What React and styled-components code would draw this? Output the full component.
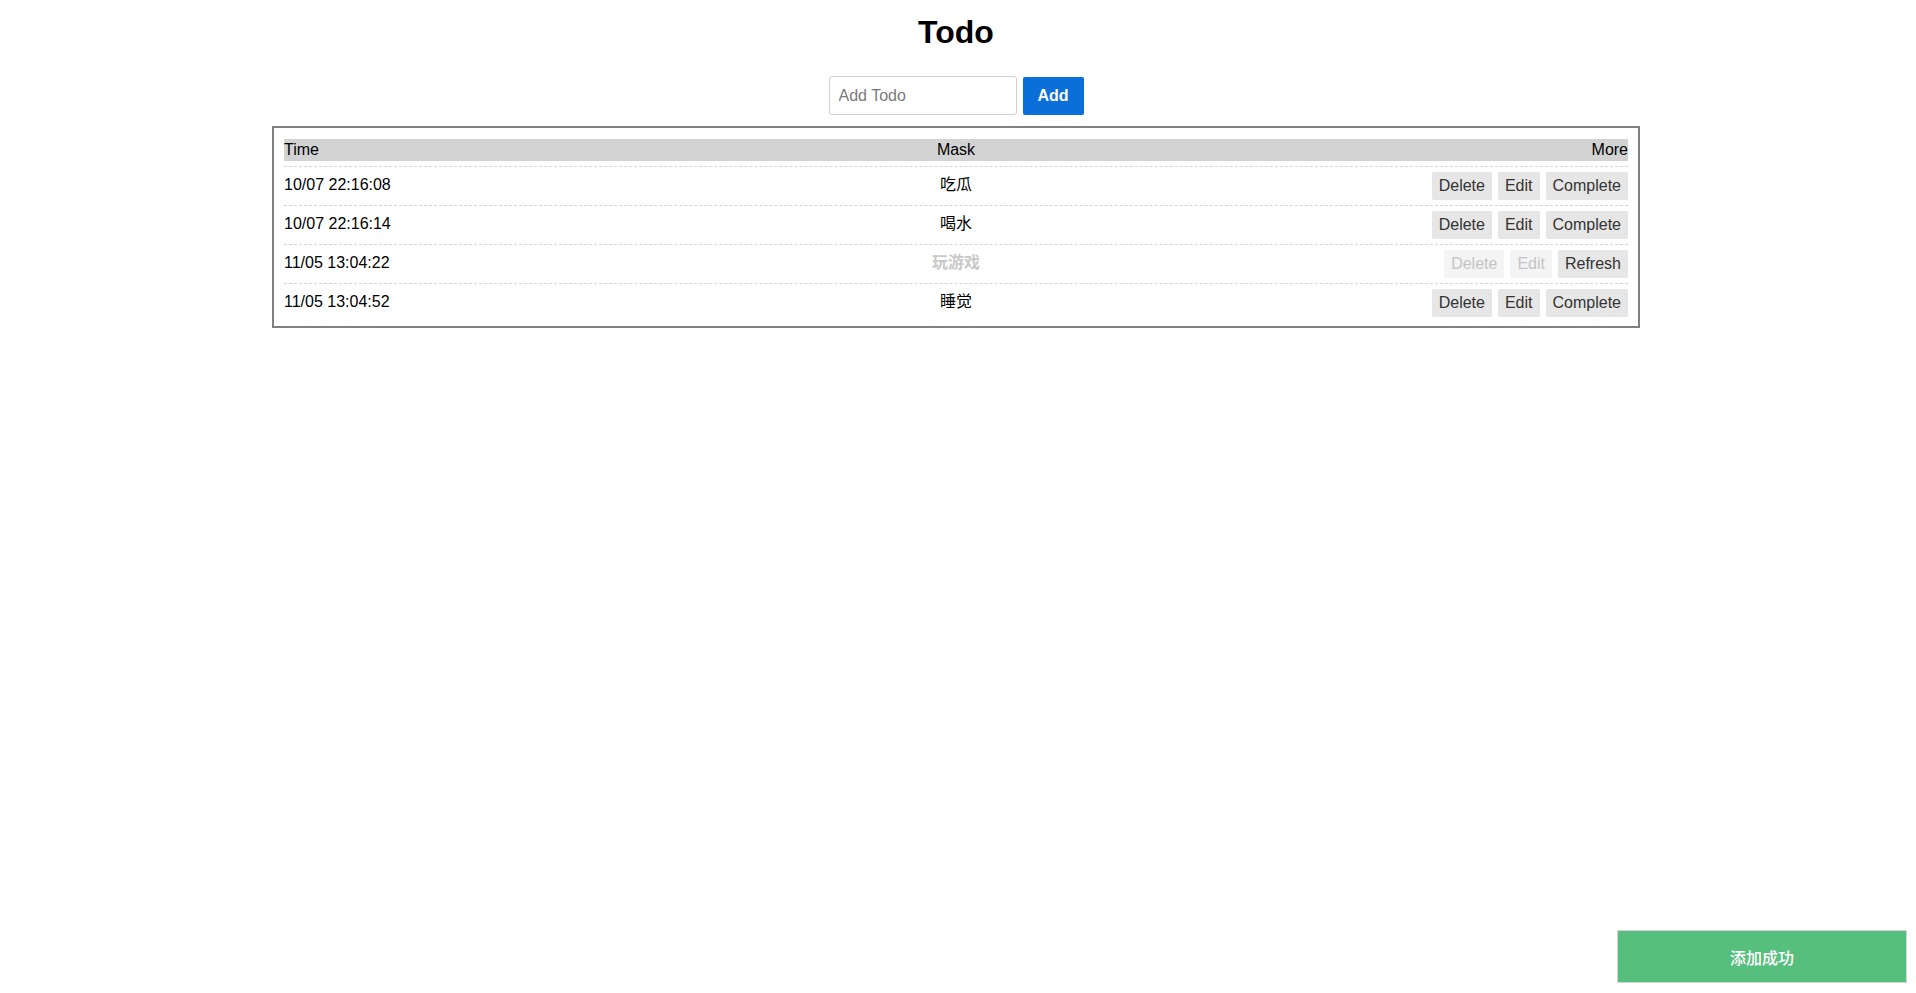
import React, { useState } from 'react';
import styled, { createGlobalStyle, css } from 'styled-components';

const GlobalStyle = createGlobalStyle`
	html, body {
		margin: 0;
		padding: 0;
		background: #fff;
	}
	body {
		font-family: 'Liberation Sans', Arial, 'Noto Sans CJK SC', sans-serif;
		font-size: 16px;
		color: #000;
	}
`;

const Page = styled.div`
	padding: 14px 4px 0 0;
`;

const Title = styled.h1`
	margin: 0;
	font-size: 32px;
	font-weight: bold;
	line-height: 37px;
	text-align: center;
`;

const AddForm = styled.form`
	display: flex;
	justify-content: center;
	gap: 6px;
	margin: 25px 0 11px;
`;

const TodoInput = styled.input`
	box-sizing: border-box;
	width: 188px;
	height: 39px;
	padding: 0 9px;
	border: 1px solid #cfcfcf;
	border-radius: 3px;
	font-family: inherit;
	font-size: 16px;
	color: #333;
	outline: none;
	&::placeholder {
		color: #7a7a7a;
	}
`;

const AddButton = styled.button`
	box-sizing: border-box;
	width: 61px;
	height: 38px;
	margin-top: 1px;
	border: none;
	border-radius: 2px;
	background-color: #0a6fd8;
	color: #fff;
	font-family: inherit;
	font-size: 16px;
	font-weight: bold;
`;

const Board = styled.div`
	box-sizing: border-box;
	width: 1368px;
	margin: 0 auto;
	padding: 11px 10px 4px;
	border: 2px solid #808080;
`;

const Grid = css`
	display: grid;
	grid-template-columns: 1fr 1fr 1fr;
	align-items: center;
`;

const HeaderRow = styled.div`
	${Grid};
	height: 22px;
	margin-bottom: 5px;
	background-color: #d3d3d3;
	line-height: 22px;
`;

const Row = styled.div`
	${Grid};
	padding: 5px 0;
	border-top: 1px dashed #d4d4d4;
	line-height: 18px;
`;

const Cell = styled.div`
	height: 18px;
	margin-top: -3px;
	text-align: ${props => props.align || 'left'};
	${props =>
		props.done &&
		css`
			color: #c8c8c8;
			font-weight: bold;
		`}
`;

const HeadCell = styled.div`
	text-align: ${props => props.align || 'left'};
`;

const Actions = styled.div`
	display: flex;
	justify-content: flex-end;
	gap: 6px;
`;

const ActionButton = styled.button`
	height: 28px;
	padding: 0 7px;
	border: none;
	border-radius: 2px;
	background-color: #e6e6e6;
	color: #333;
	font-family: inherit;
	font-size: 16px;
	cursor: pointer;
	&:disabled {
		background-color: #f4f4f4;
		color: #c4c4c4;
		cursor: default;
	}
`;

const Toast = styled.div`
	position: fixed;
	right: 9px;
	bottom: 10px;
	box-sizing: border-box;
	width: 290px;
	height: 53px;
	display: flex;
	align-items: center;
	justify-content: center;
	border: 1px solid #d6d6d6;
	background-color: #57bf7d;
	color: #fff;
	font-family: 'Noto Sans CJK SC', sans-serif;
	font-size: 16px;
	font-weight: 500;
`;

const initialTodos = [
	{ time: '10/07 22:16:08', mask: '吃瓜', done: false },
	{ time: '10/07 22:16:14', mask: '喝水', done: false },
	{ time: '11/05 13:04:22', mask: '玩游戏', done: true },
	{ time: '11/05 13:04:52', mask: '睡觉', done: false },
];

const App = () => {
	const [todos] = useState(initialTodos);

	return (
		<Page>
			<GlobalStyle />
			<Title>Todo</Title>
			<AddForm onSubmit={e => e.preventDefault()}>
				<TodoInput placeholder="Add Todo" />
				<AddButton type="submit">Add</AddButton>
			</AddForm>
			<Board>
				<HeaderRow>
					<HeadCell>Time</HeadCell>
					<HeadCell align="center">Mask</HeadCell>
					<HeadCell align="right">More</HeadCell>
				</HeaderRow>
				{todos.map(todo => (
					<Row key={todo.time}>
						<Cell>{todo.time}</Cell>
						<Cell align="center" done={todo.done}>
							{todo.mask}
						</Cell>
						<Actions>
							<ActionButton disabled={todo.done}>Delete</ActionButton>
							<ActionButton disabled={todo.done}>Edit</ActionButton>
							<ActionButton>{todo.done ? 'Refresh' : 'Complete'}</ActionButton>
						</Actions>
					</Row>
				))}
			</Board>
			<Toast>添加成功</Toast>
		</Page>
	);
};

export default App;
